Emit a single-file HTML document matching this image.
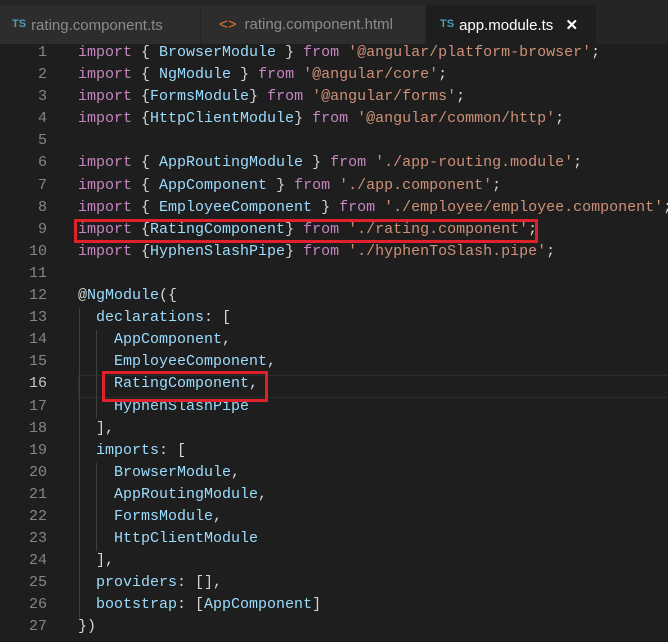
<!DOCTYPE html>
<html><head><style>
body{margin:0;width:668px;height:642px;background:#1e1e1e;overflow:hidden;position:relative;font-family:"Liberation Mono",monospace}
.tabs{position:absolute;top:0;left:0;width:668px;height:44px;background:#252526;font-family:"Liberation Sans",sans-serif;font-size:15px;color:#8b8b8b}
.tab{position:absolute;top:5px;height:39px;line-height:39px;background:#2d2d2d}
.ts{color:#519aba;font-size:11px;font-weight:bold;vertical-align:3px;margin-right:5px}
.code{position:absolute;top:42px;left:0;font-size:15px;line-height:22.1px}
.l{height:22.1px;position:relative}
.n{display:inline-block;width:47px;text-align:right;color:#858585}
.c{position:absolute;left:78px;top:0;white-space:pre}
.k{color:#c586c0}.s{color:#ce9178}.i{color:#9cdcfe}.p{color:#d4d4d4}
.box{position:absolute;border:3px solid #e0202a}
.g{position:absolute;width:1px;background:#404040}
</style></head><body>
<div class="tabs">
<div class="tab" style="left:0;width:200px;padding-left:12px;box-sizing:border-box"><span class="ts">TS</span>rating.component.ts</div>
<div class="tab" style="left:201px;width:224px;padding-left:18px;box-sizing:border-box"><span style="color:#e37933;margin-right:8px">&lt;&gt;</span>rating.component.html</div>
<div class="tab" style="left:426px;width:170px;padding-left:14px;box-sizing:border-box;background:#1e1e1e;color:#fff"><span class="ts">TS</span>app.module.ts <span style="margin-left:8px;font-weight:bold">✕</span></div>
</div>
<div style="position:absolute;left:78px;top:375px;width:590px;height:21px;border:1px solid #2c2c2c;border-right:none"></div>
<div class="g" style="left:79px;top:308px;height:310px"></div>
<div class="g" style="left:96px;top:330px;height:88px"></div>
<div class="g" style="left:96px;top:463px;height:88px"></div>
<div class="code">
<div class="l"><span class="n">1</span><span class="c"><span class="k">import</span><span class="p"> { </span><span class="i">BrowserModule</span><span class="p"> } </span><span class="k">from</span> <span class="s">'@angular/platform-browser'</span><span class="p">;</span></span></div>
<div class="l"><span class="n">2</span><span class="c"><span class="k">import</span><span class="p"> { </span><span class="i">NgModule</span><span class="p"> } </span><span class="k">from</span> <span class="s">'@angular/core'</span><span class="p">;</span></span></div>
<div class="l"><span class="n">3</span><span class="c"><span class="k">import</span><span class="p"> {</span><span class="i">FormsModule</span><span class="p">} </span><span class="k">from</span> <span class="s">'@angular/forms'</span><span class="p">;</span></span></div>
<div class="l"><span class="n">4</span><span class="c"><span class="k">import</span><span class="p"> {</span><span class="i">HttpClientModule</span><span class="p">} </span><span class="k">from</span> <span class="s">'@angular/common/http'</span><span class="p">;</span></span></div>
<div class="l"><span class="n">5</span></div>
<div class="l"><span class="n">6</span><span class="c"><span class="k">import</span><span class="p"> { </span><span class="i">AppRoutingModule</span><span class="p"> } </span><span class="k">from</span> <span class="s">'./app-routing.module'</span><span class="p">;</span></span></div>
<div class="l"><span class="n">7</span><span class="c"><span class="k">import</span><span class="p"> { </span><span class="i">AppComponent</span><span class="p"> } </span><span class="k">from</span> <span class="s">'./app.component'</span><span class="p">;</span></span></div>
<div class="l"><span class="n">8</span><span class="c"><span class="k">import</span><span class="p"> { </span><span class="i">EmployeeComponent</span><span class="p"> } </span><span class="k">from</span> <span class="s">'./employee/employee.component'</span><span class="p">;</span></span></div>
<div class="l"><span class="n">9</span><span class="c"><span class="k">import</span><span class="p"> {</span><span class="i">RatingComponent</span><span class="p">} </span><span class="k">from</span> <span class="s">'./rating.component'</span><span class="p">;</span></span></div>
<div class="l"><span class="n">10</span><span class="c"><span class="k">import</span><span class="p"> {</span><span class="i">HyphenSlashPipe</span><span class="p">} </span><span class="k">from</span> <span class="s">'./hyphenToSlash.pipe'</span><span class="p">;</span></span></div>
<div class="l"><span class="n">11</span></div>
<div class="l"><span class="n">12</span><span class="c"><span class="p">@</span><span class="i">NgModule</span><span class="p">({</span></span></div>
<div class="l"><span class="n">13</span><span class="c"><span class="i">  declarations</span><span class="p">: [</span></span></div>
<div class="l"><span class="n">14</span><span class="c"><span class="i">    AppComponent</span><span class="p">,</span></span></div>
<div class="l"><span class="n">15</span><span class="c"><span class="i">    EmployeeComponent</span><span class="p">,</span></span></div>
<div class="l"><span class="n" style="color:#c6c6c6">16</span><span class="c"><span class="i">    RatingComponent</span><span class="p">,</span></span></div>
<div class="l"><span class="n">17</span><span class="c"><span class="i">    HyphenSlashPipe</span></span></div>
<div class="l"><span class="n">18</span><span class="c"><span class="p">  ],</span></span></div>
<div class="l"><span class="n">19</span><span class="c"><span class="i">  imports</span><span class="p">: [</span></span></div>
<div class="l"><span class="n">20</span><span class="c"><span class="i">    BrowserModule</span><span class="p">,</span></span></div>
<div class="l"><span class="n">21</span><span class="c"><span class="i">    AppRoutingModule</span><span class="p">,</span></span></div>
<div class="l"><span class="n">22</span><span class="c"><span class="i">    FormsModule</span><span class="p">,</span></span></div>
<div class="l"><span class="n">23</span><span class="c"><span class="i">    HttpClientModule</span></span></div>
<div class="l"><span class="n">24</span><span class="c"><span class="p">  ],</span></span></div>
<div class="l"><span class="n">25</span><span class="c"><span class="i">  providers</span><span class="p">: [],</span></span></div>
<div class="l"><span class="n">26</span><span class="c"><span class="i">  bootstrap</span><span class="p">: [</span><span class="i">AppComponent</span><span class="p">]</span></span></div>
<div class="l"><span class="n">27</span><span class="c"><span class="p">})</span></span></div>
</div>
<div class="box" style="left:74px;top:219px;width:458px;height:18px"></div>
<div class="box" style="left:102px;top:371px;width:160px;height:25px"></div>
</body></html>
